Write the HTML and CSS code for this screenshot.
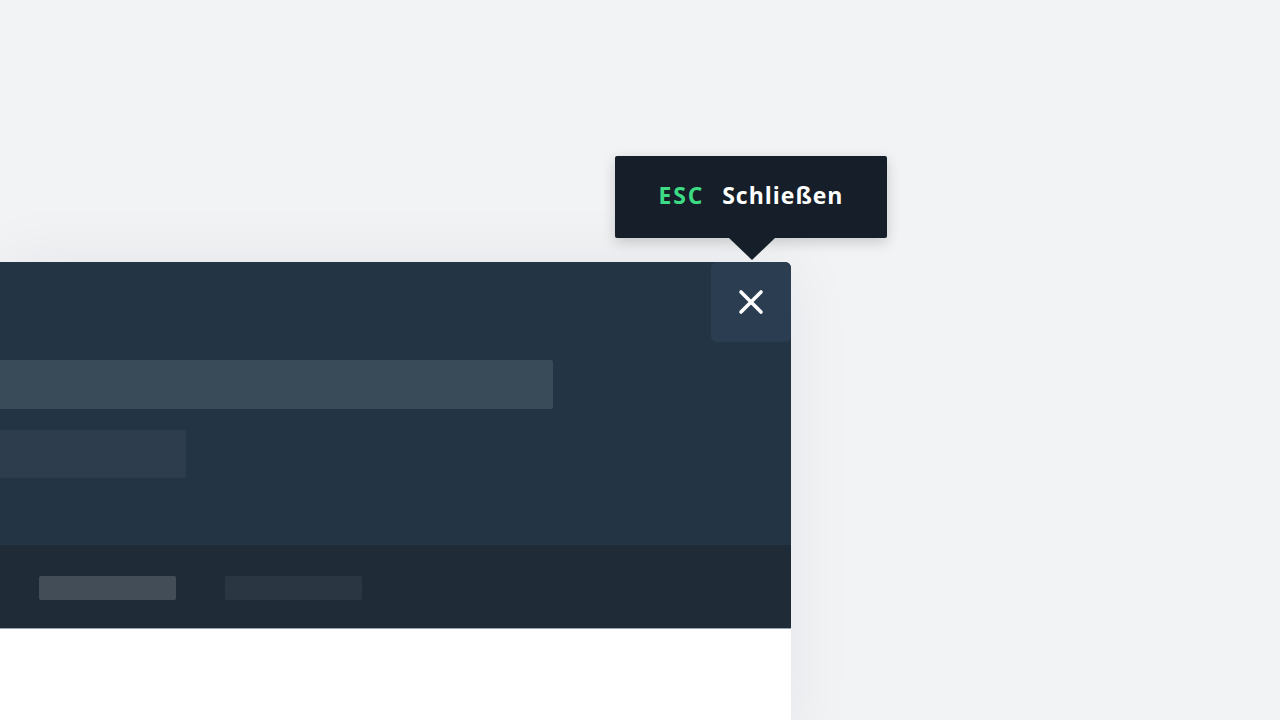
FILE: index.html
```html
<!DOCTYPE html>
<html lang="de">
<head>
<meta charset="utf-8">
<link rel="stylesheet" href="styles.css">
</head>
<body>
<div class="stage">
  <div class="card">
    <div class="card-head">
      <div class="bar bar-title"></div>
      <div class="bar bar-sub"></div>
      <button class="close" aria-label="Schließen">
        <svg width="26" height="26" viewBox="0 0 26 26"><path d="M3 3L23 23M23 3L3 23" stroke="#ffffff" stroke-width="3.6" stroke-linecap="round" fill="none"/></svg>
        <div class="tooltip"><span class="key">ESC</span><span class="label">Schließen</span></div>
      </button>
    </div>
    <div class="card-foot">
      <div class="pill pill-a"></div>
      <div class="pill pill-b"></div>
    </div>
    <div class="card-body"></div>
  </div>
</div>
</body>
</html>
```
FILE: styles.css
```css
html, body {
  margin: 0;
  padding: 0;
}
body {
  background: #f2f3f5;
  width: 1280px;
  height: 720px;
  overflow: hidden;
  font-family: "Open Sans", "Noto Sans", sans-serif;
}
.stage {
  padding-top: 262px;
}
.card {
  position: relative;
  width: 791px;
  border-top-right-radius: 6px;
  box-shadow: 0 0 70px rgba(20, 30, 45, 0.06);
  background: #ffffff;
}
.card-head {
  position: relative;
  height: 283px;
  background: #233545;
  border-top-right-radius: 6px;
  padding-top: 98px;
  box-sizing: border-box;
  display: flex;
  flex-direction: column;
  gap: 21px;
}
.bar {
  border-radius: 0 2px 2px 0;
}
.bar-title {
  width: 553px;
  height: 49px;
  background: #394a58;
}
.bar-sub {
  width: 186px;
  height: 48px;
  background: #2d3d4d;
}
.close {
  position: absolute;
  top: 0;
  right: 0;
  width: 80px;
  height: 80px;
  border: none;
  padding: 0;
  border-radius: 6px;
  background: #2b3d50;
  display: flex;
  align-items: center;
  justify-content: center;
  font: inherit;
}
.tooltip {
  position: absolute;
  bottom: 104px;
  left: -96px;
  width: 272px;
  height: 82px;
  background: #161f29;
  border-radius: 2px;
  box-shadow: 0 4px 14px rgba(0, 0, 0, 0.18);
  display: flex;
  align-items: center;
  justify-content: center;
  gap: 18px;
  font-family: "Open Sans", "Noto Sans", sans-serif;
  font-weight: 700;
  font-size: 23px;
  letter-spacing: 1px;
  white-space: nowrap;
  padding: 0 0 4px 0;
  box-sizing: border-box;
}
.tooltip::after {
  content: "";
  position: absolute;
  top: 100%;
  left: 114px;
  border-left: 23px solid transparent;
  border-right: 23px solid transparent;
  border-top: 22px solid #161f29;
}
.key {
  color: #3ddc84;
  letter-spacing: 1.8px;
}
.label {
  color: #ffffff;
}
.card-foot {
  height: 84px;
  background: #1f2c38;
  border-bottom: 1px solid #9aa3ad;
  box-sizing: border-box;
  display: flex;
  align-items: flex-start;
  padding: 31px 0 0 39px;
  gap: 49px;
}
.pill {
  width: 137px;
  height: 24px;
  border-radius: 2px;
}
.pill-a {
  background: #424d58;
}
.pill-b {
  background: #2a3642;
}
.card-body {
  height: 120px;
  background: #ffffff;
}
```
